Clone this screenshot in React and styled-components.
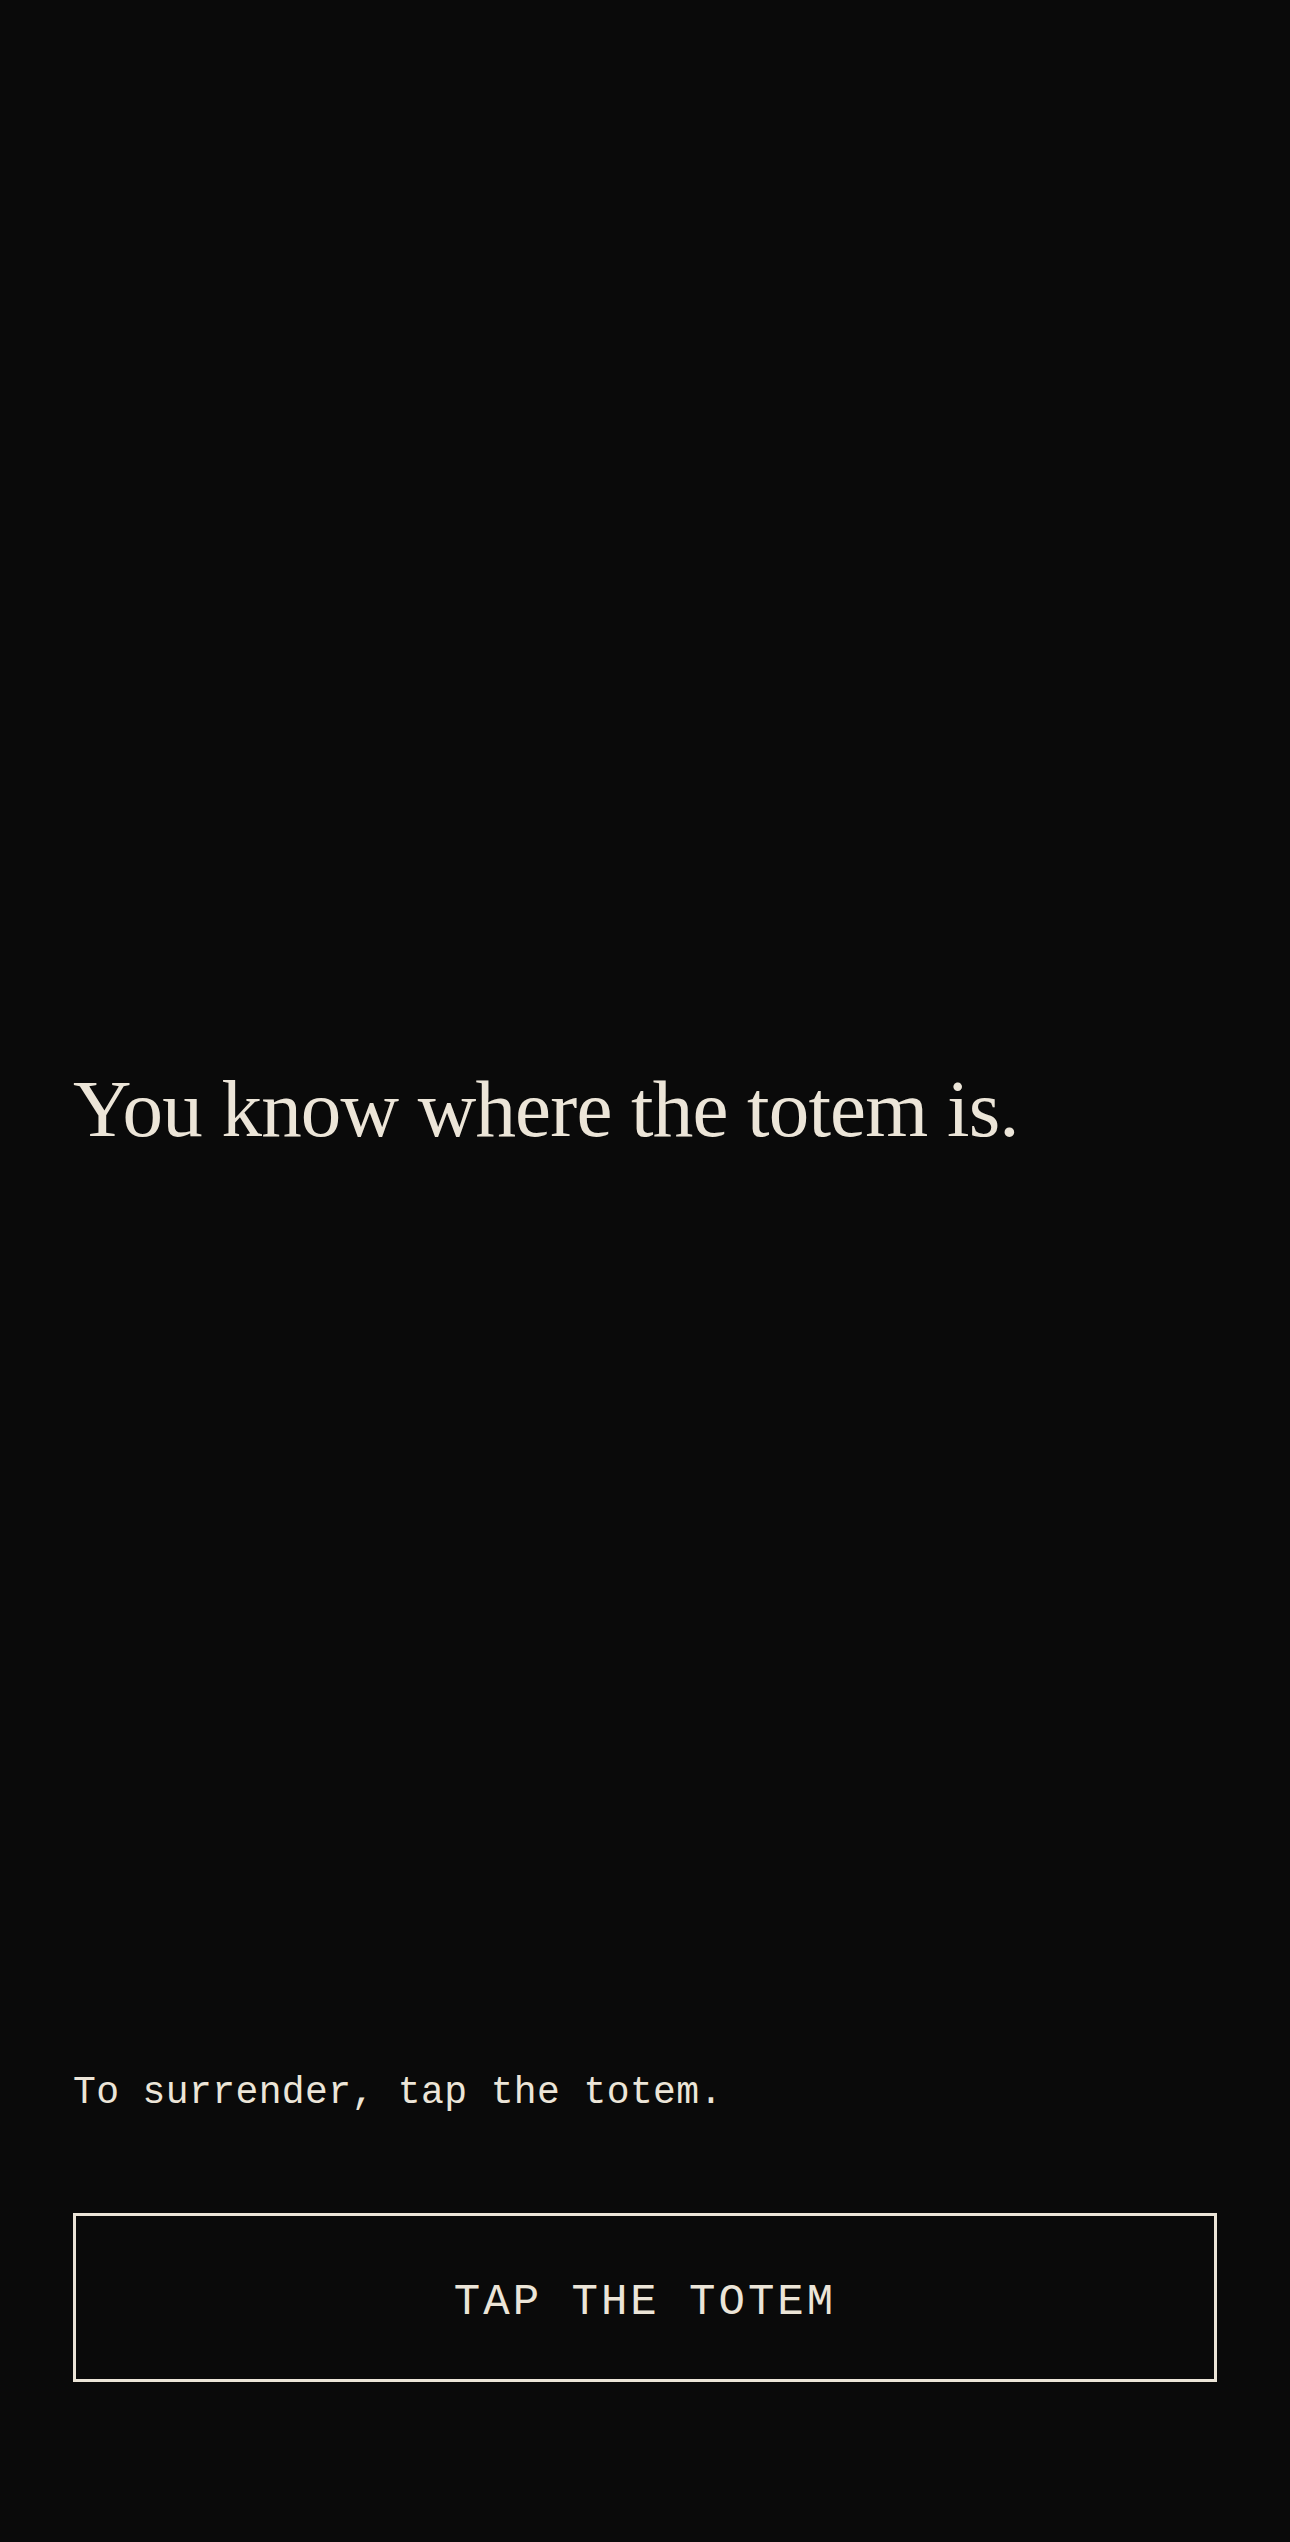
import React from "react"
import styled, { createGlobalStyle } from "styled-components"

const GlobalStyle = createGlobalStyle`
	html, body {
		margin: 0;
		padding: 0;
		background: #0a0a0a;
	}
	* {
		box-sizing: border-box;
	}
`

const Screen = styled.div`
	min-height: 2542px;
	display: flex;
	flex-direction: column;
	padding: 0 73px 160px;
	background: #0a0a0a;
	color: #ece5d8;
`

const Main = styled.main`
	flex: 1;
	padding-top: 1061px;
`

const Heading = styled.h1`
	margin: 0;
	font-family: "Liberation Serif", "Times New Roman", serif;
	font-weight: 400;
	font-size: 81px;
	line-height: 1.2;
	letter-spacing: -0.8px;
`

const Footer = styled.footer`
	display: flex;
	flex-direction: column;
	gap: 94px;
`

const Hint = styled.p`
	margin: 0;
	font-family: "Liberation Mono", "Courier New", monospace;
	font-size: 38px;
	line-height: 1.4;
	letter-spacing: 0.4px;
`

const TotemButton = styled.button`
	display: flex;
	align-items: center;
	justify-content: center;
	width: 100%;
	height: 169px;
	padding: 8px 0 0;
	background: transparent;
	border: 3px solid #ece5d8;
	color: #ece5d8;
	font-family: "Liberation Mono", "Courier New", monospace;
	font-size: 44px;
	letter-spacing: 3px;
	text-transform: uppercase;
	cursor: pointer;
`

export default function App() {
	return (
		<>
			<GlobalStyle />
			<Screen>
				<Main>
					<Heading>You know where the totem is.</Heading>
				</Main>
				<Footer>
					<Hint>To surrender, tap the totem.</Hint>
					<TotemButton>Tap the totem</TotemButton>
				</Footer>
			</Screen>
		</>
	)
}
